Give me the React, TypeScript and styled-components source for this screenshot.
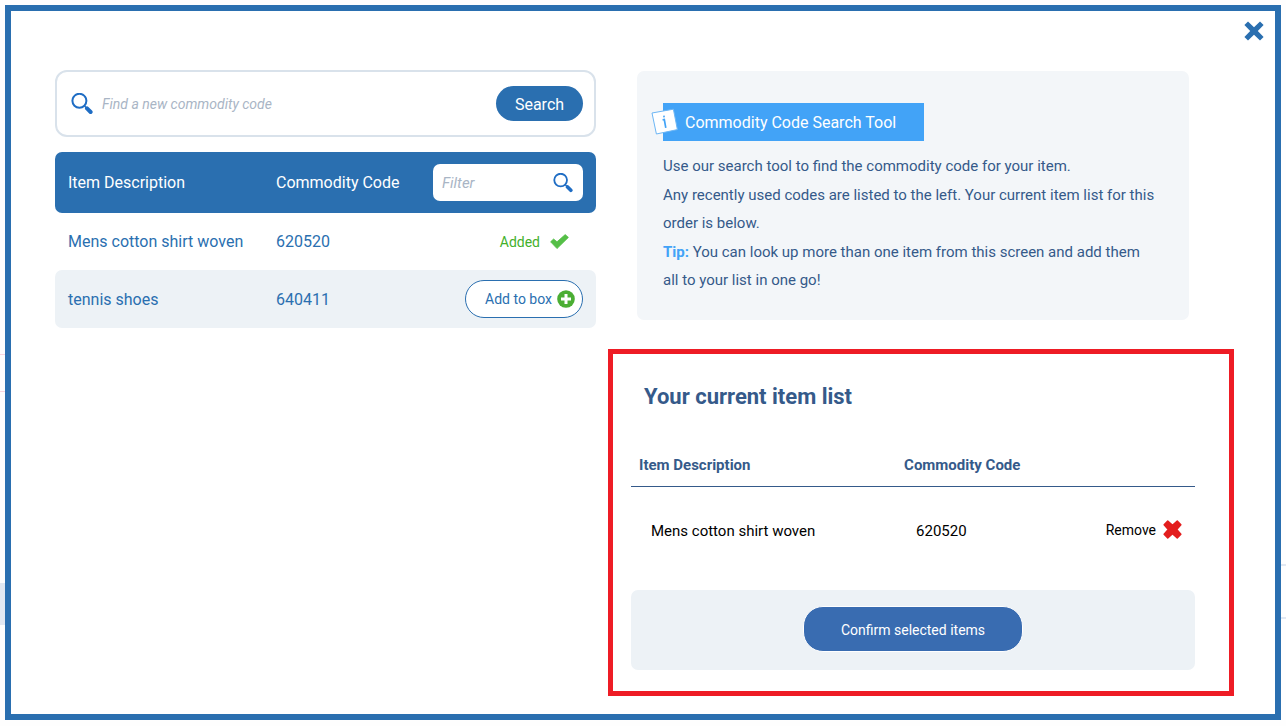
import React, { useState } from "react";
import styled, { createGlobalStyle } from "styled-components";

const blue = "#2a6fb0";
const navy = "#355a8a";
const pale = "#edf2f6";

const GlobalStyle = createGlobalStyle`
  *, *::before, *::after { box-sizing: border-box; }
  body { margin: 0; background: #fefefe; font-family: Roboto, "Liberation Sans", sans-serif; }
  h1, h2, p { margin: 0; }
  button, input { font-family: inherit; }
  button { cursor: pointer; }
  table { border-collapse: separate; border-spacing: 0; table-layout: fixed; width: 100%; }
  th { text-align: left; }
  svg { display: block; flex: none; }
`;

const Page = styled.div`
  position: relative;
  min-height: 100vh;
  padding: 5px 5px 6px;
  display: flex;
`;

const Backdrop = styled.div`
  position: absolute;
  inset: 0;
  padding-top: 354px;
  overflow: hidden;
`;

const BackdropRow = styled.div`
  height: 38px;
  margin-right: 50%;
  border: solid #f9d5e0;
  border-width: 1px 0;
`;

const BackdropBand = styled.div`
  width: 50%;
  height: 42px;
  margin-top: 191px;
  background: #e1e8f2;
`;

const BackdropField = styled.div`
  position: absolute;
  top: 564px;
  right: 0;
  width: 40%;
  height: 55px;
  border: solid #e1e8f2;
  border-width: 2px 0;
`;

const Dialog = styled.section`
  position: relative;
  flex: 1;
  min-width: 0;
  border: 6px solid ${blue};
  background: #fff;
  padding: 59px 41px 18px 44px;
  display: grid;
  grid-template-columns: minmax(0, 541fr) minmax(0, 626fr);
  column-gap: 12px;
  align-items: start;
`;

const CloseButton = styled.button`
  position: absolute;
  top: 10px;
  right: 11px;
  padding: 0;
  border: 0;
  background: none;
`;

const Column = styled.div`
  min-width: 0;
`;

const SearchForm = styled.form`
  display: flex;
  align-items: center;
  gap: 9px;
  height: 67px;
  padding: 0 11px 0 14px;
  border: 2px solid #d9e2eb;
  border-radius: 12px;
`;

const TextInput = styled.input<{ $size: number }>`
  flex: 1;
  min-width: 0;
  padding: 0;
  border: 0;
  outline: 0;
  background: none;
  font-size: ${(p) => p.$size}px;
  color: ${navy};
  &::placeholder { color: #a9b5c5; font-style: italic; opacity: 1; }
`;

const SearchButton = styled.button`
  height: 35px;
  width: 87px;
  padding: 2px 0 0;
  border: 0;
  border-radius: 18px;
  background: ${blue};
  color: #fff;
  font-size: 16px;
`;

const CodesTable = styled.table`
  margin-top: 15px;
  color: ${blue};
  font-size: 16px;
  th, td { padding: 0 0 0 13px; height: 58px; font-weight: 400; }
  th { height: 61px; background: ${blue}; color: #fff; }
  tr > :first-child { border-radius: 7px 0 0 7px; }
  tr > :last-child { border-radius: 0 7px 7px 0; padding: 0 13px 0 0; }
  tr > :nth-child(2) { padding-left: 0; }
  tbody tr:first-child td { height: 57px; }
  tbody tr:nth-child(even) td { background: ${pale}; }
`;

const DescriptionCol = styled.col`
  width: 221px;
`;

const CodeCol = styled.col`
  width: 157px;
`;

const FilterBox = styled.label`
  display: flex;
  align-items: center;
  height: 37px;
  padding: 0 10px 0 9px;
  border-radius: 7px;
  background: #fff;
`;

const Added = styled.span`
  display: flex;
  align-items: center;
  justify-content: flex-end;
  gap: 10px;
  padding-right: 14px;
  font-size: 14px;
  color: #43b02a;
`;

const AddButton = styled.button`
  display: flex;
  align-items: center;
  gap: 5px;
  height: 38px;
  margin-left: auto;
  padding: 0 7px 0 19px;
  border: 1px solid ${blue};
  border-radius: 19px;
  background: #fff;
  color: ${blue};
  font-size: 14px;
  white-space: nowrap;
`;

const InfoCard = styled.aside`
  display: flex;
  flex-direction: column;
  gap: 1px;
  margin: 1px 45px 0 29px;
  min-height: 249px;
  padding: 32px 32px 24px 26px;
  border-radius: 7px;
  background: #f3f6f9;
  color: ${navy};
  font-size: 15px;
  line-height: 28px;
`;

const Banner = styled.h1`
  position: relative;
  width: max-content;
  height: 38px;
  margin-bottom: 10px;
  padding: 0 28px 0 22px;
  background: #42a3f7;
  color: #fff;
  font-size: 16px;
  font-weight: 400;
  line-height: 40px;
  svg { position: absolute; left: -12px; top: 5px; }
`;

const Tip = styled.strong`
  color: #42a3f7;
`;

const ListPanel = styled.section`
  margin-top: 29px;
  padding: 29px 34px 21px 18px;
  border: 5px solid #ee1c25;
`;

const ListTitle = styled.h2`
  padding-left: 13px;
  color: ${navy};
  font-size: 22px;
  line-height: 28px;
`;

const ItemsTable = styled.table`
  margin-top: 32px;
  font-size: 15px;
  color: #000;
  th { height: 44px; padding: 0 8px; border-bottom: 1px solid ${navy}; color: ${navy}; font-weight: 700; }
  td { height: 87px; padding: 0 0 0 20px; }
  td:last-child { padding: 0 13px 2px 0; }
`;

const RemoveButton = styled.button`
  display: flex;
  align-items: center;
  gap: 7px;
  margin-left: auto;
  padding: 0;
  border: 0;
  background: none;
  color: #000;
  font-size: 14px;
`;

const Footer = styled.footer`
  display: flex;
  justify-content: center;
  margin-top: 16px;
  padding: 16px 16px 18px;
  border-radius: 7px;
  background: ${pale};
`;

const ConfirmButton = styled.button`
  width: 220px;
  height: 46px;
  padding: 2px 0 0;
  border: 1px solid #fff;
  border-radius: 20px;
  background: #396cb1;
  color: #fff;
  font-size: 14px;
`;

const SearchIcon = ({ size }: { size: number }) => (
  <svg width={size} height={size} viewBox="0 0 22 22" fill="none" stroke="#1f6dc4" aria-hidden="true">
    <circle cx="8.4" cy="7.8" r="7" strokeWidth="2" />
    <path d="M13.6 13l2.4 2.4" strokeWidth="1.4" />
    <path d="M16 15.4l3.6 3.6" strokeWidth="4" strokeLinecap="round" />
  </svg>
);

const CloseIcon = () => (
  <svg width="20" height="20" viewBox="0 0 20 20" aria-hidden="true">
    <path d="M4 .4L10 6.2 16 .4 19.6 4 13.8 10 19.6 16 16 19.6 10 13.8 4 19.6 .4 16 6.2 10 .4 4z" fill={blue} />
  </svg>
);

const RemoveIcon = () => (
  <svg width="19" height="19" viewBox="0 0 20 20" aria-hidden="true">
    <path d="M5 1.2L10 5.6 15 1.2 18.8 5 14.4 10 18.8 15 15 18.8 10 14.4 5 18.8 1.2 15 5.6 10 1.2 5z" fill="#e31e1e" stroke="#e31e1e" strokeWidth="1.6" strokeLinejoin="round" />
  </svg>
);

const TickIcon = () => (
  <svg width="19" height="16" viewBox="0 0 19 16" aria-hidden="true">
    <path d="M.6 7.8L3.6 5 7 7.8 15.2.6 18.4 3.4 7 14.6z" fill="#55bf47" stroke="#55bf47" strokeWidth=".8" strokeLinejoin="round" />
  </svg>
);

const PlusIcon = () => (
  <svg width="18" height="18" viewBox="0 0 18 18" aria-hidden="true">
    <circle cx="9" cy="9" r="8.8" fill="#4bae33" />
    <path d="M9 4v10M4 9h10" stroke="#fff" strokeWidth="3" />
  </svg>
);

const InfoIcon = () => (
  <svg width="28" height="28" viewBox="0 0 28 28" aria-hidden="true">
    <path d="M1 5L22.4 1.2 26.4 21.6 5.4 26z" fill="#fff" stroke="#6cb6f5" strokeWidth="1" strokeLinejoin="round" />
    <path d="M11.6 11.8l1.7-.3 1.5 8.4M12.2 8.7l1.6-.3" fill="none" stroke="#42a3f7" strokeWidth="1.7" />
  </svg>
);

export default function App() {
  const [query, setQuery] = useState("");
  const [filter, setFilter] = useState("");
  return (
    <>
      <GlobalStyle />
      <Page>
        <Backdrop aria-hidden="true">
          <BackdropRow />
          <BackdropBand />
          <BackdropField />
        </Backdrop>
        <Dialog role="dialog" aria-label="Commodity Code Search Tool">
          <CloseButton type="button" aria-label="Close">
            <CloseIcon />
          </CloseButton>
          <Column>
            <SearchForm onSubmit={(e) => e.preventDefault()}>
              <SearchIcon size={22} />
              <TextInput $size={14} aria-label="Find a new commodity code" placeholder="Find a new commodity code" value={query} onChange={(e) => setQuery(e.target.value)} />
              <SearchButton type="submit">Search</SearchButton>
            </SearchForm>
            <CodesTable>
              <colgroup>
                <DescriptionCol />
                <CodeCol />
                <col />
              </colgroup>
              <thead>
                <tr>
                  <th scope="col">Item Description</th>
                  <th scope="col">Commodity Code</th>
                  <th scope="col">
                    <FilterBox>
                      <TextInput $size={15} aria-label="Filter" placeholder="Filter" value={filter} onChange={(e) => setFilter(e.target.value)} />
                      <SearchIcon size={20} />
                    </FilterBox>
                  </th>
                </tr>
              </thead>
              <tbody>
                <tr>
                  <td>Mens cotton shirt woven</td>
                  <td>620520</td>
                  <td><Added>Added <TickIcon /></Added></td>
                </tr>
                <tr>
                  <td>tennis shoes</td>
                  <td>640411</td>
                  <td><AddButton type="button">Add to box <PlusIcon /></AddButton></td>
                </tr>
              </tbody>
            </CodesTable>
          </Column>
          <Column>
            <InfoCard>
              <Banner><InfoIcon />Commodity Code Search Tool</Banner>
              <p>Use our search tool to find the commodity code for your item.</p>
              <p>Any recently used codes are listed to the left. Your current item list for this order is below.</p>
              <p><Tip>Tip:</Tip> You can look up more than one item from this screen and add them all to your list in one go!</p>
            </InfoCard>
            <ListPanel>
              <ListTitle>Your current item list</ListTitle>
              <ItemsTable>
                <colgroup>
                  <col width="47%" />
                  <col width="30%" />
                  <col />
                </colgroup>
                <thead>
                  <tr>
                    <th scope="col">Item Description</th>
                    <th scope="col">Commodity Code</th>
                    <th aria-label="Actions" />
                  </tr>
                </thead>
                <tbody>
                  <tr>
                    <td>Mens cotton shirt woven</td>
                    <td>620520</td>
                    <td><RemoveButton type="button">Remove <RemoveIcon /></RemoveButton></td>
                  </tr>
                </tbody>
              </ItemsTable>
              <Footer>
                <ConfirmButton type="button">Confirm selected items</ConfirmButton>
              </Footer>
            </ListPanel>
          </Column>
        </Dialog>
      </Page>
    </>
  );
}
